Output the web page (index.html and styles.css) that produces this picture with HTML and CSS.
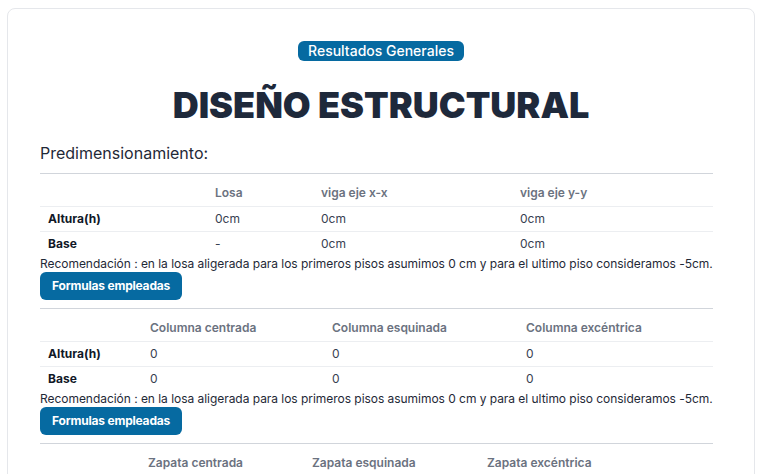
FILE: index.html
```html
<!DOCTYPE html>
<html lang="es">
<head>
<meta charset="utf-8">
<title>Diseño estructural</title>
<link rel="stylesheet" href="styles.css">
</head>
<body>
<div class="card">
  <div class="head">
    <span class="badge">Resultados Generales</span>
    <h1 class="title">DISEÑO ESTRUCTURAL</h1>
  </div>
  <div class="results">
    <h2 class="subtitle">Predimensionamiento:</h2>
    <hr class="rule">
    <table class="tbl t1">
      <colgroup><col class="c1"><col class="c2"><col class="c3"><col class="c4"></colgroup>
      <thead><tr><th></th><th>Losa</th><th>viga eje x-x</th><th>viga eje y-y</th></tr></thead>
      <tbody>
        <tr><td class="lbl">Altura(h)</td><td>0cm</td><td>0cm</td><td>0cm</td></tr>
        <tr><td class="lbl">Base</td><td>-</td><td>0cm</td><td>0cm</td></tr>
      </tbody>
    </table>
    <p class="note">Recomendación : en la losa aligerada para los primeros pisos asumimos 0 cm y para el ultimo piso consideramos -5cm.</p>
    <button class="btn" type="button">Formulas empleadas</button>
    <hr class="rule">
    <table class="tbl t2">
      <colgroup><col class="c1"><col class="c2"><col class="c3"><col class="c4"></colgroup>
      <thead><tr><th></th><th>Columna centrada</th><th>Columna esquinada</th><th>Columna excéntrica</th></tr></thead>
      <tbody>
        <tr><td class="lbl">Altura(h)</td><td>0</td><td>0</td><td>0</td></tr>
        <tr><td class="lbl">Base</td><td>0</td><td>0</td><td>0</td></tr>
      </tbody>
    </table>
    <p class="note">Recomendación : en la losa aligerada para los primeros pisos asumimos 0 cm y para el ultimo piso consideramos -5cm.</p>
    <button class="btn" type="button">Formulas empleadas</button>
    <hr class="rule">
    <table class="tbl t3">
      <colgroup><col class="c1"><col class="c2"><col class="c3"><col class="c4"></colgroup>
      <thead><tr><th></th><th>Zapata centrada</th><th>Zapata esquinada</th><th>Zapata excéntrica</th></tr></thead>
      <tbody>
        <tr><td class="lbl">Altura(h)</td><td>0</td><td>0</td><td>0</td></tr>
        <tr><td class="lbl">Base</td><td>0</td><td>0</td><td>0</td></tr>
      </tbody>
    </table>
  </div>
</div>
</body>
</html>
```

FILE: styles.css
```css
html, body {
  margin: 0;
  padding: 0;
  background: #ffffff;
}
body {
  padding: 8px 7px;
  font-family: Inter, "Noto Sans", "Liberation Sans", sans-serif;
  color: #1f2937;
}
.card {
  border: 1px solid #e5e7eb;
  border-radius: 8px;
  padding: 32px 32px 32px 32px;
  background: #ffffff;
}
.head {
  display: flex;
  flex-direction: column;
  align-items: center;
}
.badge {
  display: inline-block;
  background: #066aa1;
  color: #ffffff;
  font-size: 14px;
  font-weight: 500;
  line-height: 20px;
  height: 20px;
  padding: 0 10px;
  border-radius: 6px;
}
.title {
  margin: 24px 0 0 0;
  font-size: 36px;
  line-height: 40px;
  font-weight: 900;
  color: #1e293b;
  letter-spacing: 0;
}
.results {
  margin-right: 9px;
}
.subtitle {
  margin: 16px 0 0 0;
  font-size: 16px;
  line-height: 24px;
  font-weight: 400;
  color: #1f2937;
}
.rule {
  border: 0;
  border-top: 1px solid #d1d5db;
  margin: 8px 0 7px 0;
  height: 0;
}
.tbl {
  width: 100%;
  border-collapse: collapse;
  table-layout: fixed;
  font-size: 12px;
  line-height: 16px;
}
.tbl th, .tbl td {
  text-align: left;
  padding: 4px 8px 5px 8px;
  white-space: nowrap;
}
.tbl th {
  color: #6b7280;
  font-weight: 600;
}
.tbl td {
  color: #374151;
  font-weight: 400;
}
.tbl tbody tr {
  border-top: 1px solid #eceef1;
}
.tbl tbody tr td {
  padding: 4px 8px 4px 8px;
}
.tbl td.lbl {
  color: #111827;
  font-weight: 700;
}
.t1 .c1 { width: 167px; }
.t1 .c2 { width: 106px; }
.t1 .c3 { width: 199px; }
.t1 .c4 { width: 201px; }
.t2 .c1 { width: 102px; }
.t2 .c2 { width: 182px; }
.t2 .c3 { width: 194px; }
.t2 .c4 { width: 195px; }
.t3 .c1 { width: 100px; }
.t3 .c2 { width: 164px; }
.t3 .c3 { width: 175px; }
.t3 .c4 { width: 234px; }
.note {
  margin: 0;
  font-size: 12px;
  line-height: 15px;
  letter-spacing: -0.04px;
  white-space: nowrap;
  color: #1f2937;
}
.btn {
  display: block;
  margin: 1px 0 0 0;
  height: 28px;
  padding: 0 12px;
  border: 0;
  border-radius: 6px;
  background: #066aa1;
  color: #ffffff;
  font-family: inherit;
  font-size: 12px;
  font-weight: 700;
  letter-spacing: -0.2px;
  line-height: 28px;
}
```
